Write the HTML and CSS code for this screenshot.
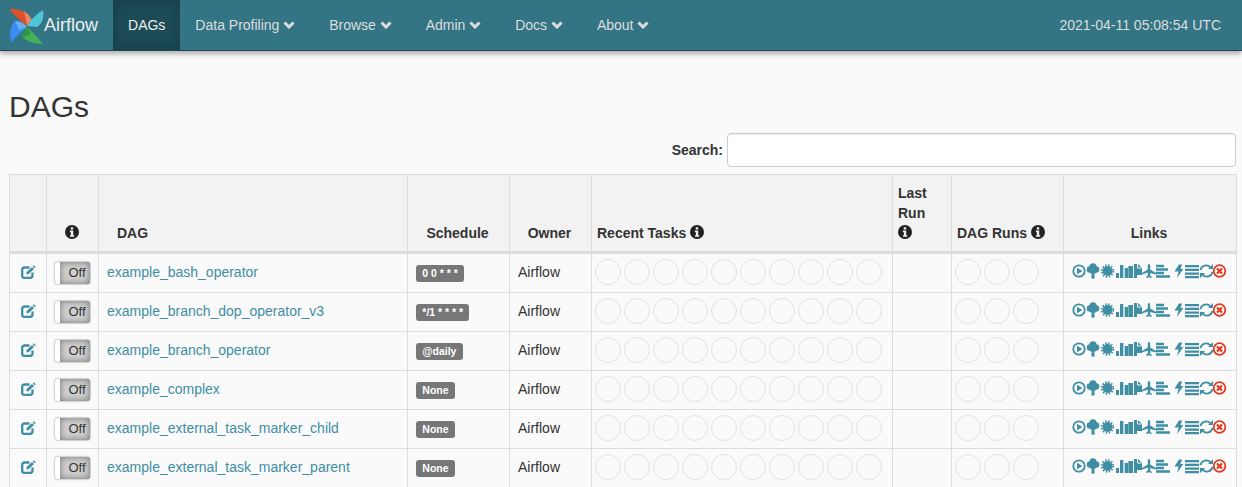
FILE: index.html
```html
<!DOCTYPE html>
<html lang="en">
<head>
    <meta charset="UTF-8">
    <title>Airflow - DAGs</title>
    <link rel="stylesheet" href="styles.css">
</head>
<body>
    <!-- shared icons -->
    <svg class="defs" width="0" height="0">
        <defs>
            <symbol id="info" viewBox="0 0 14 14">
                <path fill-rule="evenodd" d="M7 0a7 7 0 1 0 0 14A7 7 0 0 0 7 0zM5.8 2.2h2.4v2.2H5.8zM4.9 5.6h3.3v4.6h1v1.6H4.9v-1.6h1V7.2h-1z"/>
            </symbol>
            <symbol id="edit" viewBox="0 0 15 14">
                <path d="M8.500 2.500H3.500A2.300 2.300 0 0 0 1.200 4.800v6a2 2 0 0 0 2 2h6a2.300 2.300 0 0 0 2.300-2.300V7.500" fill="none" stroke="currentColor" stroke-width="2.300"/>
                <path d="M5.500 9.300V7.300l5.500-5.300 2 2-5.500 5.300zM11.700 1.300l1-1 2 2-1 1z" fill="currentColor"/>
            </symbol>
            <symbol id="tasks" viewBox="0 0 290 26">
                <g fill="none" stroke="#e2e2e2">
                    <circle cx="13" cy="13" r="12.5"/><circle cx="42" cy="13" r="12.5"/><circle cx="71" cy="13" r="12.5"/><circle cx="100" cy="13" r="12.5"/><circle cx="129" cy="13" r="12.5"/>
                    <circle cx="158" cy="13" r="12.5"/><circle cx="187" cy="13" r="12.5"/><circle cx="216" cy="13" r="12.5"/><circle cx="245" cy="13" r="12.5"/><circle cx="274" cy="13" r="12.5"/>
                </g>
            </symbol>
            <symbol id="runs" viewBox="0 0 88 26">
                <g fill="none" stroke="#e2e2e2">
                    <circle cx="13" cy="13" r="12.5"/><circle cx="42" cy="13" r="12.5"/><circle cx="71" cy="13" r="12.5"/>
                </g>
            </symbol>
            <symbol id="links" viewBox="0 0 156 16">
                <g fill="#3f8ea3">
                    <circle cx="7" cy="8" r="5.7" fill="none" stroke="#3f8ea3" stroke-width="1.8"/>
                    <path d="M5 4.800L10.400 8 5 11.200z"/>
                    <circle cx="21" cy="3.800" r="3.600"/>
                    <circle cx="18" cy="6.500" r="3.300"/>
                    <circle cx="24" cy="6.500" r="3.300"/>
                    <circle cx="21" cy="7.500" r="3.600"/>
                    <path d="M19.900 9h2.200l.6 6.600h-3.400z"/>
                    <circle cx="35.500" cy="8" r="5"/>
                    <circle cx="35.500" cy="8" r="5.800" fill="none" stroke="#3f8ea3" stroke-width="1.800" stroke-dasharray="1.500 1.540"/>
                    <path d="M44 10h3v5h-3zM48 2h3.300v13H48zM52.700 5H56v10h-3.300zM56.300 3H61v12h-4.700z"/>
                    <path d="M62 1h4l4 4v7h-5v3h-3z"/>
                    <path d="M77 1c1 0 1.200 1 1.200 2v3.600l5.800 3.400v1.500l-5.800-1.600v2.800l1.600 1.300V15l-2.800-.7-2.800.7v-1.300l1.600-1.300v-2.800L70 11.500V10l5.800-3.400V3c0-1 .2-2 1.200-2z"/>
                    <path d="M84 1.800h8v2.500h-8zM84 5.300h12v2.500H84zM84 8.800h8v2.500h-8zM84 12.300h14v2.500H84z"/>
                    <path d="M107 1.500h3.200l-1.800 4.500h3L105 15l1.600-6.500h-4.100z"/>
                    <path d="M113 2h14v2.300h-14zM113 5.700h14V8h-14zM113 9.400h14v2.300h-14zM113 13h14v2.300h-14z"/>
                </g>
                <path d="M65.500 1v4h4" fill="none" stroke="#fafafa" stroke-width="1"/>
                <g fill="none" stroke="#3f8ea3" stroke-width="1.800">
                    <path d="M128.500 7a5.800 5.800 0 0 1 10-2.700"/>
                    <path d="M140.500 9a5.800 5.800 0 0 1-10 2.700"/>
                </g>
                <path d="M141 1v5h-5zM128 15v-5h5z" fill="#3f8ea3"/>
                <circle cx="147.500" cy="8" r="5.800" fill="none" stroke="#e43921" stroke-width="1.800"/>
                <path d="M145 5.500l5 5M150 5.500l-5 5" stroke="#e43921" stroke-width="2.200"/>
            </symbol>
        </defs>
    </svg>

    <nav class="navbar">
        <a class="brand" href="#">
            <svg class="logo" width="35" height="36" viewBox="0 0 35 36">
                <path d="M0 1Q14-1 23 12L17 18Q6 8 0 1z" fill="#d9522c"/>
                <path d="M15 3Q20 6 23 12L18 17z" fill="#ea8560"/>
                <path d="M34 2Q36 14 28 19L18 18Q24 8 34 2z" fill="#4fc6d6"/>
                <path d="M2 35Q-1 20 6 13L18 19Q10 25 2 35z" fill="#3d8bf0"/>
                <path d="M6 13Q12 12 18 19L10 22z" fill="#62b0f5"/>
                <path d="M34 36Q22 36 14 30Q12 24 18 19Q26 26 34 36z" fill="#44b05a"/>
                <path d="M14 30Q12 24 18 19L22 25z" fill="#2f9448"/>
            </svg>
            <span>Airflow</span>
        </a>
        <a class="nav-item active" href="#">DAGs</a>
        <a class="nav-item" href="#">Data Profiling <svg class="caret" viewBox="0 0 12 8"><path d="M1.500 1.500L6 6l4.500-4.500"/></svg></a>
        <a class="nav-item" href="#">Browse <svg class="caret" viewBox="0 0 12 8"><path d="M1.500 1.500L6 6l4.500-4.500"/></svg></a>
        <a class="nav-item" href="#">Admin <svg class="caret" viewBox="0 0 12 8"><path d="M1.500 1.500L6 6l4.500-4.500"/></svg></a>
        <a class="nav-item" href="#">Docs <svg class="caret" viewBox="0 0 12 8"><path d="M1.500 1.500L6 6l4.500-4.500"/></svg></a>
        <a class="nav-item" href="#">About <svg class="caret" viewBox="0 0 12 8"><path d="M1.500 1.500L6 6l4.500-4.500"/></svg></a>
        <span class="clock">2021-04-11 05:08:54 UTC</span>
    </nav>

    <div class="container">
        <h2>DAGs</h2>
        <div class="search">
            <label for="q">Search:</label>
            <input id="q" type="search">
        </div>
        <table>
            <thead>
                <tr>
                    <th class="c-edit"></th>
                    <th class="c-toggle"><svg class="info"><use href="#info"/></svg></th>
                    <th class="c-dag left">DAG</th>
                    <th class="c-schedule">Schedule</th>
                    <th class="c-owner">Owner</th>
                    <th class="c-tasks left">Recent Tasks <svg class="info"><use href="#info"/></svg></th>
                    <th class="c-last left">Last Run <svg class="info"><use href="#info"/></svg></th>
                    <th class="c-runs left">DAG Runs <svg class="info"><use href="#info"/></svg></th>
                    <th class="c-links">Links</th>
                </tr>
            </thead>
            <tbody>
                <tr>
                    <td class="center"><svg class="edit"><use href="#edit"/></svg></td>
                    <td class="center"><span class="toggle">Off</span></td>
                    <td><a href="#">example_bash_operator</a></td>
                    <td><span class="badge">0 0 * * *</span></td>
                    <td>Airflow</td>
                    <td class="circles"><svg class="tasks"><use href="#tasks"/></svg></td>
                    <td></td>
                    <td class="circles"><svg class="runs"><use href="#runs"/></svg></td>
                    <td class="icons"><svg class="links"><use href="#links"/></svg></td>
                </tr>
                <tr>
                    <td class="center"><svg class="edit"><use href="#edit"/></svg></td>
                    <td class="center"><span class="toggle">Off</span></td>
                    <td><a href="#">example_branch_dop_operator_v3</a></td>
                    <td><span class="badge">*/1 * * * *</span></td>
                    <td>Airflow</td>
                    <td class="circles"><svg class="tasks"><use href="#tasks"/></svg></td>
                    <td></td>
                    <td class="circles"><svg class="runs"><use href="#runs"/></svg></td>
                    <td class="icons"><svg class="links"><use href="#links"/></svg></td>
                </tr>
                <tr>
                    <td class="center"><svg class="edit"><use href="#edit"/></svg></td>
                    <td class="center"><span class="toggle">Off</span></td>
                    <td><a href="#">example_branch_operator</a></td>
                    <td><span class="badge">@daily</span></td>
                    <td>Airflow</td>
                    <td class="circles"><svg class="tasks"><use href="#tasks"/></svg></td>
                    <td></td>
                    <td class="circles"><svg class="runs"><use href="#runs"/></svg></td>
                    <td class="icons"><svg class="links"><use href="#links"/></svg></td>
                </tr>
                <tr>
                    <td class="center"><svg class="edit"><use href="#edit"/></svg></td>
                    <td class="center"><span class="toggle">Off</span></td>
                    <td><a href="#">example_complex</a></td>
                    <td><span class="badge">None</span></td>
                    <td>Airflow</td>
                    <td class="circles"><svg class="tasks"><use href="#tasks"/></svg></td>
                    <td></td>
                    <td class="circles"><svg class="runs"><use href="#runs"/></svg></td>
                    <td class="icons"><svg class="links"><use href="#links"/></svg></td>
                </tr>
                <tr>
                    <td class="center"><svg class="edit"><use href="#edit"/></svg></td>
                    <td class="center"><span class="toggle">Off</span></td>
                    <td><a href="#">example_external_task_marker_child</a></td>
                    <td><span class="badge">None</span></td>
                    <td>Airflow</td>
                    <td class="circles"><svg class="tasks"><use href="#tasks"/></svg></td>
                    <td></td>
                    <td class="circles"><svg class="runs"><use href="#runs"/></svg></td>
                    <td class="icons"><svg class="links"><use href="#links"/></svg></td>
                </tr>
                <tr>
                    <td class="center"><svg class="edit"><use href="#edit"/></svg></td>
                    <td class="center"><span class="toggle">Off</span></td>
                    <td><a href="#">example_external_task_marker_parent</a></td>
                    <td><span class="badge">None</span></td>
                    <td>Airflow</td>
                    <td class="circles"><svg class="tasks"><use href="#tasks"/></svg></td>
                    <td></td>
                    <td class="circles"><svg class="runs"><use href="#runs"/></svg></td>
                    <td class="icons"><svg class="links"><use href="#links"/></svg></td>
                </tr>
            </tbody>
        </table>
    </div>
</body>
</html>
```

FILE: styles.css
```css
body {
    font-family: "Liberation Sans", Arial, sans-serif;
    font-size: 14px;
    line-height: 20px;
    margin: 0;
    padding: 0;
    background-color: #fafafa;
    color: #333;
    overflow: hidden;
}
.defs {
    display: block;
    height: 0;
}
a {
    color: #3f8ea3;
    text-decoration: none;
}

/* top bar */
.navbar {
    display: flex;
    align-items: stretch;
    height: 50px;
    background: #337584;
    border-bottom: 1px solid #1d4650;
    box-shadow: 0 3px 5px rgba(0, 0, 0, 0.3);
}
.brand {
    display: flex;
    align-items: center;
    padding-left: 9px;
    padding-right: 15px;
    color: #eee;
    font-size: 18px;
}
.logo {
    display: block;
    margin-top: 1px;
}
.nav-item {
    display: flex;
    align-items: center;
    gap: 4px;
    padding: 0 15px;
    margin-right: 3.8px;
    color: #ddd;
}
.nav-item.active {
    margin-right: 0;
    color: #eee;
    background: #1c4a55;
    box-shadow: inset 0 0 12px rgba(0, 0, 0, 0.2);
}
.caret {
    width: 12px;
    height: 8px;
    fill: none;
    stroke: #ddd;
    stroke-width: 3;
}
.clock {
    margin-left: auto;
    padding-right: 21px;
    align-self: center;
    color: #ddd;
}

/* page */
.container {
    padding: 0 6px 0 9px;
}
h2 {
    margin: 39px 0 0;
    font-size: 30px;
    font-weight: 500;
    line-height: 33px;
}
.search {
    display: flex;
    justify-content: flex-end;
    align-items: center;
    gap: 4px;
    margin-top: 10px;
    margin-bottom: 7px;
}
.search label {
    font-weight: bold;
}
.search input {
    box-sizing: border-box;
    width: 509px;
    height: 34px;
    border: 1px solid #ccc;
    border-radius: 4px;
    background: #fff;
    box-shadow: inset 0 1px 1px rgba(0, 0, 0, 0.075);
}

/* table */
table {
    width: 1227px;
    table-layout: fixed;
    border-collapse: collapse;
}
th, td {
    box-sizing: border-box;
    border: 1px solid #ddd;
    padding: 8px;
}
thead th {
    background: #f2f2f2;
    padding: 8px 6px 10px 4px;
    vertical-align: bottom;
    text-align: center;
    box-shadow: inset 0 -2px 0 #ddd;
}
th.left {
    padding-left: 5px;
    text-align: left;
}
th.c-dag {
    padding-left: 18px;
}
th.c-last {
    padding-right: 15px;
}
.c-edit { width: 37px; }
.c-toggle { width: 52px; }
.c-dag { width: 309px; }
.c-schedule { width: 102px; }
.c-owner { width: 82px; }
.c-tasks { width: 301px; }
.c-last { width: 59px; }
.c-runs { width: 112px; }
.c-links { width: 173px; }
tbody tr {
    height: 39px;
}
tbody td {
    padding: 0 8px 2px;
    white-space: nowrap;
}
td.center {
    padding: 0;
    text-align: center;
}
td.circles {
    padding: 0 3px 2px;
}
td.icons {
    padding: 0 0 2px 8px;
}
.info {
    width: 14px;
    height: 14px;
    fill: #222;
    vertical-align: -1px;
}
.edit {
    display: block;
    width: 15px;
    height: 14px;
    margin: -2px 0 0 11px;
    color: #3f8ea3;
}
.toggle {
    display: inline-block;
    box-sizing: border-box;
    width: 35px;
    height: 22px;
    line-height: 22px;
    padding-left: 4px;
    border-left: 5px solid #fff;
    border-radius: 3px;
    background: #cfcfcf;
    box-shadow: inset 0 0 7px rgba(0, 0, 0, 0.45), 0 0 2px rgba(0, 0, 0, 0.55);
    font-size: 13px;
    text-align: center;
    vertical-align: middle;
}
.badge {
    display: inline-block;
    padding: 0 6.3px;
    height: 17px;
    line-height: 17px;
    margin-top: 2px;
    border-radius: 3px;
    background: #777;
    color: #fff;
    font-size: 10.5px;
    font-weight: bold;
    vertical-align: middle;
}
.tasks {
    display: block;
    width: 290px;
    height: 26px;
}
.runs {
    display: block;
    width: 88px;
    height: 26px;
}
.links {
    display: block;
    width: 156px;
    height: 16px;
    margin-top: -2px;
}
```
